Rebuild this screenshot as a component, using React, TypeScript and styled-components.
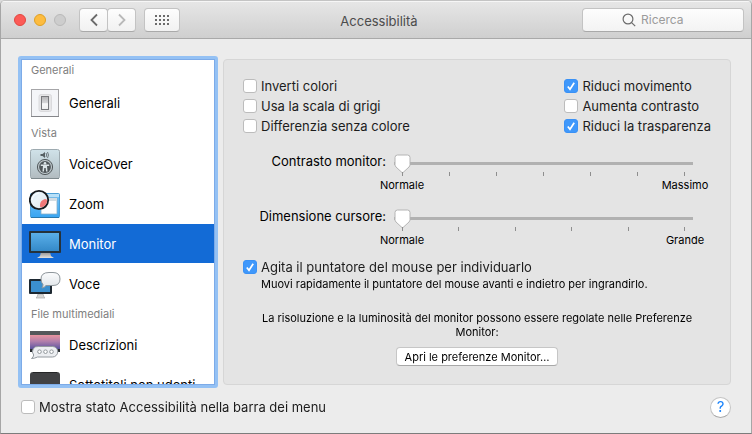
import React, { useState } from 'react';
import styled, { createGlobalStyle } from 'styled-components';

const GlobalStyle = createGlobalStyle`
  *, *::before, *::after { box-sizing: border-box; }
  body {
    margin: 0;
    background: #dcdcdc;
    color: #1c1c1c;
    font-family: Inter, "Noto Sans", sans-serif;
    font-size: 13px;
    line-height: 20px;
  }
  button, input { font: inherit; color: inherit; }
  h1, h2, p { margin: 0; font: inherit; }
`;

const Window = styled.div`
  display: flex;
  flex-direction: column;
  min-height: 100vh;
  overflow: hidden;
  border: 1px solid #a6a6a6;
  border-top-color: #c4c4c4;
  border-bottom-color: #7c7c7c;
  border-radius: 5px 5px 0 0;
  background: #ececec;
`;

const TitleBar = styled.header`
  display: grid;
  grid-template-columns: 1fr auto 1fr;
  align-items: center;
  height: 38px;
  padding: 0 7px 0 13px;
  border-top: 1px solid #f6f6f6;
  border-bottom: 1px solid #a9a9a9;
  background: linear-gradient(#e6e6e6, #cfcfcf);
`;

const Controls = styled.div`
  display: flex;
  align-items: center;
`;

const Lights = styled.div`
  display: flex;
  gap: 8px;
  margin-right: 13px;
`;

const Light = styled.button<{ $fill: string; $edge: string }>`
  width: 12px;
  height: 12px;
  padding: 0;
  border: 1px solid ${(p) => p.$edge};
  border-radius: 50%;
  background: ${(p) => p.$fill};
`;

const ToolButton = styled.button<{ $wide?: boolean }>`
  display: flex;
  align-items: center;
  justify-content: center;
  width: ${(p) => (p.$wide ? 36 : 29)}px;
  height: 24px;
  margin-left: ${(p) => (p.$wide ? 8 : 0)}px;
  padding: 0;
  border: 1px solid #c3c3c3;
  border-bottom-color: #a9a9a9;
  border-radius: 4px;
  background: linear-gradient(#fdfdfd, #f1f1f1);
  & + &:nth-of-type(2) { margin-left: -1px; }
`;

const Title = styled.h1`
  padding-top: 2px;
  color: #4c4c4c;
`;

const Search = styled.label`
  display: flex;
  align-items: center;
  justify-self: end;
  gap: 5px;
  width: 162px;
  height: 24px;
  padding: 0 8px 0 39px;
  border: 1px solid #c3c3c3;
  border-bottom-color: #a9a9a9;
  border-radius: 4px;
  background: linear-gradient(#fdfdfd, #f3f3f3);
  svg { flex: none; }
`;

const SearchInput = styled.input`
  flex: 1;
  min-width: 0;
  padding: 0;
  border: 0;
  outline: 0;
  background: none;
  font-size: 12px;
  &::placeholder { color: #9b9b9b; opacity: 1; }
`;

const Body = styled.main`
  display: flex;
  flex: 1;
  gap: 5px;
  padding: 17px 20px 0 17px;
`;

const Sidebar = styled.nav`
  display: flex;
  flex: none;
  width: 200px;
  border: 3px solid #94c1f4;
  border-radius: 3px;
  background: #94c1f4;
`;

const List = styled.div`
  flex: 1;
  contain: size;
  overflow-y: auto;
  scrollbar-width: none;
  border: 1px solid #7dabe8;
  background: #fff;
`;

const GroupTitle = styled.h2<{ $first?: boolean }>`
  height: ${(p) => (p.$first ? 23 : 21)}px;
  padding-left: 9px;
  color: #808080;
  font-size: 11px;
`;

const Item = styled.button<{ $selected: boolean }>`
  display: flex;
  align-items: center;
  gap: 7px;
  width: 100%;
  height: 39px;
  margin-bottom: 1px;
  padding: 1px 0 0 7px;
  border: 0;
  background: ${(p) => (p.$selected ? '#136bd6' : 'transparent')};
  color: ${(p) => (p.$selected ? '#fff' : '#000')};
  text-align: left;
  white-space: nowrap;
  svg { flex: none; }
`;

const Panel = styled.section`
  display: flex;
  flex: 1;
  flex-direction: column;
  min-width: 0;
  margin: 3px 0 3px;
  padding: 16px 19px 17px;
  border: 1px solid #d6d6d6;
  border-radius: 4px;
  background: #e4e4e4;
`;

const Options = styled.div`
  display: flex;
  justify-content: space-between;
`;

const OptionColumn = styled.div`
  display: flex;
  flex-direction: column;
`;

const CheckLabel = styled.label`
  display: flex;
  align-items: center;
  gap: 4px;
  white-space: nowrap;
`;

const CheckBox = styled.span<{ $on: boolean }>`
  display: grid;
  flex: none;
  width: 14px;
  height: 14px;
  border: 1px solid ${(p) => (p.$on ? '#3a91f5' : '#bcbcbc')};
  border-radius: 3px;
  background: ${(p) => (p.$on ? '#3f98fb' : '#fff')};
  > * { grid-area: 1 / 1; }
`;

const CheckInput = styled.input`
  width: 12px;
  height: 12px;
  margin: 0;
  appearance: none;
`;

const Sliders = styled.div`
  display: grid;
  grid-template-columns: 143px 1fr;
  gap: 16px 8px;
  margin: 18px 18px 0 0;
`;

const SliderLabel = styled.label`
  color: #000;
  line-height: 14px;
  text-align: right;
`;

const SliderBody = styled.div`
  display: flex;
  flex-direction: column;
`;

const thumb = encodeURIComponent(
  '<svg xmlns="http://www.w3.org/2000/svg" width="17" height="20"><path d="M3.500 1h10q2.500 0 2.500 2.500v7q0 1.500-1 2.500l-6.500 6-6.500-6q-1-1-1-2.500v-7q0-2.500 2.500-2.500z" fill="#fff" stroke="#b4b4b4"/></svg>',
);

const Range = styled.input`
  width: 100%;
  height: 19px;
  margin: 0;
  appearance: none;
  background: linear-gradient(#b1b1b1, #b1b1b1) 0 8px / 100% 3px no-repeat;
  &::-webkit-slider-thumb {
    width: 17px;
    height: 20px;
    appearance: none;
    background: url("data:image/svg+xml,${thumb}") no-repeat;
  }
`;

const Ticks = styled.div`
  display: flex;
  justify-content: space-between;
  height: 4px;
  margin: -1px 8px 0;
`;

const Tick = styled.span`
  width: 1px;
  background: #8e8e8e;
`;

const Ends = styled.div`
  display: flex;
  justify-content: space-between;
  margin: 1px -22px 0;
  color: #000;
  font-size: 11px;
  line-height: 16px;
  span { width: 60px; text-align: center; }
`;

const Shake = styled.div`
  margin-top: 9px;
`;

const Hint = styled.p`
  padding-left: 18px;
  color: #000;
  font-size: 11px;
  line-height: 14px;
`;

const Notice = styled.p`
  margin: 20px 0 8px;
  color: #000;
  font-size: 11px;
  line-height: 14px;
  text-align: center;
`;

const OpenButton = styled.button`
  align-self: center;
  height: 19px;
  padding: 0 8px;
  border: 1px solid #c6c6c6;
  border-bottom-color: #a8a8a8;
  border-radius: 4px;
  background: #fff;
  color: #000;
  font-size: 11px;
  line-height: 16px;
`;

const Footer = styled.footer`
  display: flex;
  align-items: center;
  justify-content: space-between;
  height: 45px;
  padding: 0 20px 7px;
`;

const HelpButton = styled.button`
  width: 21px;
  height: 21px;
  padding: 0;
  border: 1px solid #c4c4c4;
  border-bottom-color: #a8a8a8;
  border-radius: 50%;
  background: #fff;
  color: #1a83fb;
  font-size: 15px;
  line-height: 18px;
`;

const Chevron = ({ d, color }: { d: string; color: string }) => (
  <svg width="10" height="14" viewBox="0 0 10 14" fill="none" stroke={color} strokeWidth="1.800">
    <path d={d} />
  </svg>
);

const GridIcon = () => (
  <svg width="14" height="10" fill="#6b6b6b">
    {[0, 4, 8].map((y) => [0, 4, 8, 12].map((x) => <rect key={`${x}-${y}`} x={x} y={y} width="2" height="2" />))}
  </svg>
);

const SearchIcon = () => (
  <svg width="14" height="14" viewBox="0 0 14 14" fill="none" stroke="#6c6c6c" strokeWidth="1.200">
    <circle cx="6" cy="6" r="4.900" />
    <path d="M9.600 9.600 13.200 13.200" />
  </svg>
);

const GeneralIcon = () => (
  <svg width="33" height="34" viewBox="0 0 33 34">
    <defs>
      <linearGradient id="switch" x2="0" y2="1"><stop stopColor="#b4b4b7" /><stop offset=".5" stopColor="#d8d8da" /><stop offset=".55" stopColor="#f9f9fa" /><stop offset="1" stopColor="#eee" /></linearGradient>
    </defs>
    <rect x="2.500" y="3.500" width="27" height="27" fill="#f4f5f8" stroke="#a5a5a8" />
    <path d="M2 30.500h28" stroke="#85868a" />
    <rect x="10" y="8.500" width="12.500" height="17" rx="2" fill="#e6e6e8" stroke="#dadadd" />
    <rect x="12.500" y="10.500" width="7" height="13" fill="url(#switch)" stroke="#77787c" />
  </svg>
);

const VoiceOverIcon = () => (
  <svg width="33" height="34" viewBox="0 0 33 34">
    <defs>
      <linearGradient id="vo" x2="0" y2="1"><stop stopColor="#d0e2e9" /><stop offset=".5" stopColor="#c0d0d6" /><stop offset="1" stopColor="#b2bbbf" /></linearGradient>
    </defs>
    <rect x="1.500" y="2.500" width="29" height="29" rx="2" fill="url(#vo)" stroke="#9daab0" />
    <path d="M2 31.500h28" stroke="#7e898d" />
    <path d="M11.500 7h2l2.500-2v6l-2.500-2h-2z" fill="#576064" />
    <path d="M17 6q1.500 2 0 4M18.500 5q2 3 0 6" fill="none" stroke="#576064" strokeWidth=".8" />
    <circle cx="16" cy="20" r="7.600" fill="#b9c3c7" stroke="#535a5d" strokeWidth="1" />
    <circle cx="16" cy="20" r="5.900" fill="#50575a" />
    <circle cx="16" cy="16.300" r="1.300" fill="#dbe4e7" />
    <path d="M11.800 18.200h8.400M16 18v3M14.800 18.500l-.6 6M17.200 18.500l.6 6" stroke="#dbe4e7" strokeWidth="1.500" />
  </svg>
);

const ZoomIcon = () => (
  <svg width="33" height="34" viewBox="0 0 33 34">
    <defs>
      <linearGradient id="desk" x2="0" y2="1"><stop stopColor="#79c5f9" /><stop offset="1" stopColor="#39a5f2" /></linearGradient>
      <linearGradient id="lens" x2="1" y2="1"><stop stopColor="#cde6f8" /><stop offset=".4" stopColor="#eaf3f8" /><stop offset="1" stopColor="#dbe3e9" /></linearGradient>
    </defs>
    <rect x="1.500" y="6.500" width="29" height="24" rx="1" fill="url(#desk)" stroke="#4d9fd6" />
    <path d="M10 7h20v3H10z" fill="#b8e0f8" />
    <path d="M2 30.500h28" stroke="#2877ad" />
    <path d="M12 11h16v16H12z" fill="#fdfdfe" stroke="#83adc9" strokeWidth=".8" />
    <path d="M12 11h16v3H12z" fill="#d3dce2" />
    <circle cx="10" cy="13" r="9.200" fill="url(#lens)" stroke="#161a1d" strokeWidth="1.800" />
    <path d="M11 18q0-4.500 5-6 2.600 0 2 3-1.500 4.500-6 5.500-1.500-.5-1-2.500z" fill="#f17878" />
    <path d="M3 13q1-6 7-7" fill="none" stroke="#fff" strokeWidth="1.500" opacity=".7" />
  </svg>
);

const MonitorIcon = () => (
  <svg width="33" height="34" viewBox="0 0 33 34">
    <defs>
      <linearGradient id="screen" x2="0" y2="1"><stop stopColor="#5aafe9" /><stop offset="1" stopColor="#3489c8" /></linearGradient>
      <linearGradient id="stand" x2="0" y2="1"><stop stopColor="#8e8e8e" /><stop offset="1" stopColor="#e4e2dd" /></linearGradient>
    </defs>
    <path d="M12 25h9l1 4 3 2H8l3-2z" fill="url(#stand)" />
    <rect y="4" width="32" height="22" rx="1" fill="#25323b" />
    <rect x="2" y="6" width="28" height="18" fill="url(#screen)" />
  </svg>
);

const SpeechIcon = () => (
  <svg width="33" height="34" viewBox="0 0 33 34">
    <defs>
      <linearGradient id="bubble" x2="0" y2="1"><stop stopColor="#fbfcfd" /><stop offset="1" stopColor="#dfe4e8" /></linearGradient>
    </defs>
    <path d="M9 27h5l1 3 1 1H7l1-1z" fill="#d6d6d4" stroke="#aaa" strokeWidth=".7" />
    <rect y="12" width="23" height="15" rx="1" fill="#1d2831" />
    <rect x="2" y="14" width="19" height="11" fill="#3b8fce" />
    <path d="M20 5.500h4q7 0 7 6.500t-7 6.500h-7q-1.500 2-4 2.500 1-1.500 1-3.500-2-2-2-5.500 0-6.500 8-6.500z" fill="url(#bubble)" stroke="#8f979c" />
  </svg>
);

const DescriptionIcon = () => (
  <svg width="33" height="34" viewBox="0 0 33 34">
    <defs>
      <linearGradient id="sunset" x2="0" y2="1"><stop stopColor="#e8949f" /><stop offset=".45" stopColor="#b27fab" /><stop offset="1" stopColor="#5c54a0" /></linearGradient>
    </defs>
    <rect x="1" y="3" width="30" height="21" fill="#292c2f" />
    <path d="M1 3h30v4H1z" fill="#54575a" />
    <path d="M1 7h30v14H1z" fill="url(#sunset)" />
    <path d="M9.500 18.500h14a5.200 5.200 0 0 1 0 10.500h-15q-3 1.500-6 1.500 2-1.500 2.200-3.500a5.200 5.200 0 0 1 4.800-8.500z" fill="#eceef1" stroke="#949a9f" />
    <g fill="#fff" stroke="#92989c"><circle cx="10.500" cy="23.700" r="1.800" /><circle cx="16.500" cy="23.700" r="1.800" /><circle cx="22.500" cy="23.700" r="1.800" /></g>
  </svg>
);

const CaptionIcon = () => (
  <svg width="33" height="34" viewBox="0 0 33 34">
    <rect x="1" y="4" width="30" height="28" rx="3" fill="#414244" />
    <path d="M4 4.500h24" stroke="#252627" />
    <path d="M7 20h6M15 20h11M7 25h11M20 25h6" stroke="#eee" strokeWidth="2" />
  </svg>
);

const groups = [
  { title: 'Generali', items: [{ name: 'Generali', Icon: GeneralIcon }] },
  {
    title: 'Vista',
    items: [
      { name: 'VoiceOver', Icon: VoiceOverIcon },
      { name: 'Zoom', Icon: ZoomIcon },
      { name: 'Monitor', Icon: MonitorIcon },
      { name: 'Voce', Icon: SpeechIcon },
    ],
  },
  {
    title: 'File multimediali',
    items: [
      { name: 'Descrizioni', Icon: DescriptionIcon },
      { name: 'Sottotitoli non udenti', Icon: CaptionIcon },
    ],
  },
];

function Check({ label, initial = false }: { label: string; initial?: boolean }) {
  const [on, setOn] = useState(initial);
  return (
    <CheckLabel>
      <CheckBox $on={on}>
        <CheckInput type="checkbox" checked={on} onChange={() => setOn(!on)} />
        {on && (
          <svg width="12" height="12" viewBox="0 0 12 12" fill="none" stroke="#fff" strokeWidth="1.700" pointerEvents="none">
            <path d="M2.800 6.500 5 9.200 9.200 2.800" />
          </svg>
        )}
      </CheckBox>
      {label}
    </CheckLabel>
  );
}

function Slider({ id, label, ticks, end }: { id: string; label: string; ticks: number; end: string }) {
  return (
    <>
      <SliderLabel htmlFor={id}>{label}</SliderLabel>
      <SliderBody>
        <Range id={id} type="range" min={0} max={100} defaultValue={0} />
        <Ticks>
          {Array.from({ length: ticks }, (_, i) => (
            <Tick key={i} />
          ))}
        </Ticks>
        <Ends>
          <span>Normale</span>
          <span>{end}</span>
        </Ends>
      </SliderBody>
    </>
  );
}

export default function App() {
  const [selected, setSelected] = useState('Monitor');
  return (
    <>
      <GlobalStyle />
      <Window>
        <TitleBar>
          <Controls>
            <Lights>
              <Light aria-label="Chiudi" $fill="#fc5b57" $edge="#e2463f" />
              <Light aria-label="Riduci" $fill="#fdbc40" $edge="#dfa023" />
              <Light aria-label="Ingrandisci" $fill="#cdcdcd" $edge="#b9b9b9" disabled />
            </Lights>
            <ToolButton aria-label="Indietro"><Chevron d="M8 1.500 2.500 7 8 12.500" color="#6b6b6b" /></ToolButton>
            <ToolButton aria-label="Avanti" disabled><Chevron d="M2 1.500 7.500 7 2 12.500" color="#b9b9b9" /></ToolButton>
            <ToolButton aria-label="Mostra tutte" $wide><GridIcon /></ToolButton>
          </Controls>
          <Title>Accessibilità</Title>
          <Search>
            <SearchIcon />
            <SearchInput type="text" placeholder="Ricerca" aria-label="Ricerca" />
          </Search>
        </TitleBar>
        <Body>
          <Sidebar>
            <List>
              {groups.map((group, i) => (
                <div key={group.title}>
                  <GroupTitle $first={i === 0}>{group.title}</GroupTitle>
                  {group.items.map(({ name, Icon }) => (
                    <Item key={name} $selected={name === selected} onClick={() => setSelected(name)}>
                      <Icon />
                      {name}
                    </Item>
                  ))}
                </div>
              ))}
            </List>
          </Sidebar>
          <Panel>
            <Options>
              <OptionColumn>
                <Check label="Inverti colori" />
                <Check label="Usa la scala di grigi" />
                <Check label="Differenzia senza colore" />
              </OptionColumn>
              <OptionColumn>
                <Check label="Riduci movimento" initial />
                <Check label="Aumenta contrasto" />
                <Check label="Riduci la trasparenza" initial />
              </OptionColumn>
            </Options>
            <Sliders>
              <Slider id="contrast" label="Contrasto monitor:" ticks={7} end="Massimo" />
              <Slider id="cursor" label="Dimensione cursore:" ticks={6} end="Grande" />
            </Sliders>
            <Shake>
              <Check label="Agita il puntatore del mouse per individuarlo" initial />
              <Hint>Muovi rapidamente il puntatore del mouse avanti e indietro per ingrandirlo.</Hint>
            </Shake>
            <Notice>
              La risoluzione e la luminosità del monitor possono essere regolate nelle Preferenze Monitor:
            </Notice>
            <OpenButton>Apri le preferenze Monitor…</OpenButton>
          </Panel>
        </Body>
        <Footer>
          <Check label="Mostra stato Accessibilità nella barra dei menu" />
          <HelpButton aria-label="Aiuto">?</HelpButton>
        </Footer>
      </Window>
    </>
  );
}
